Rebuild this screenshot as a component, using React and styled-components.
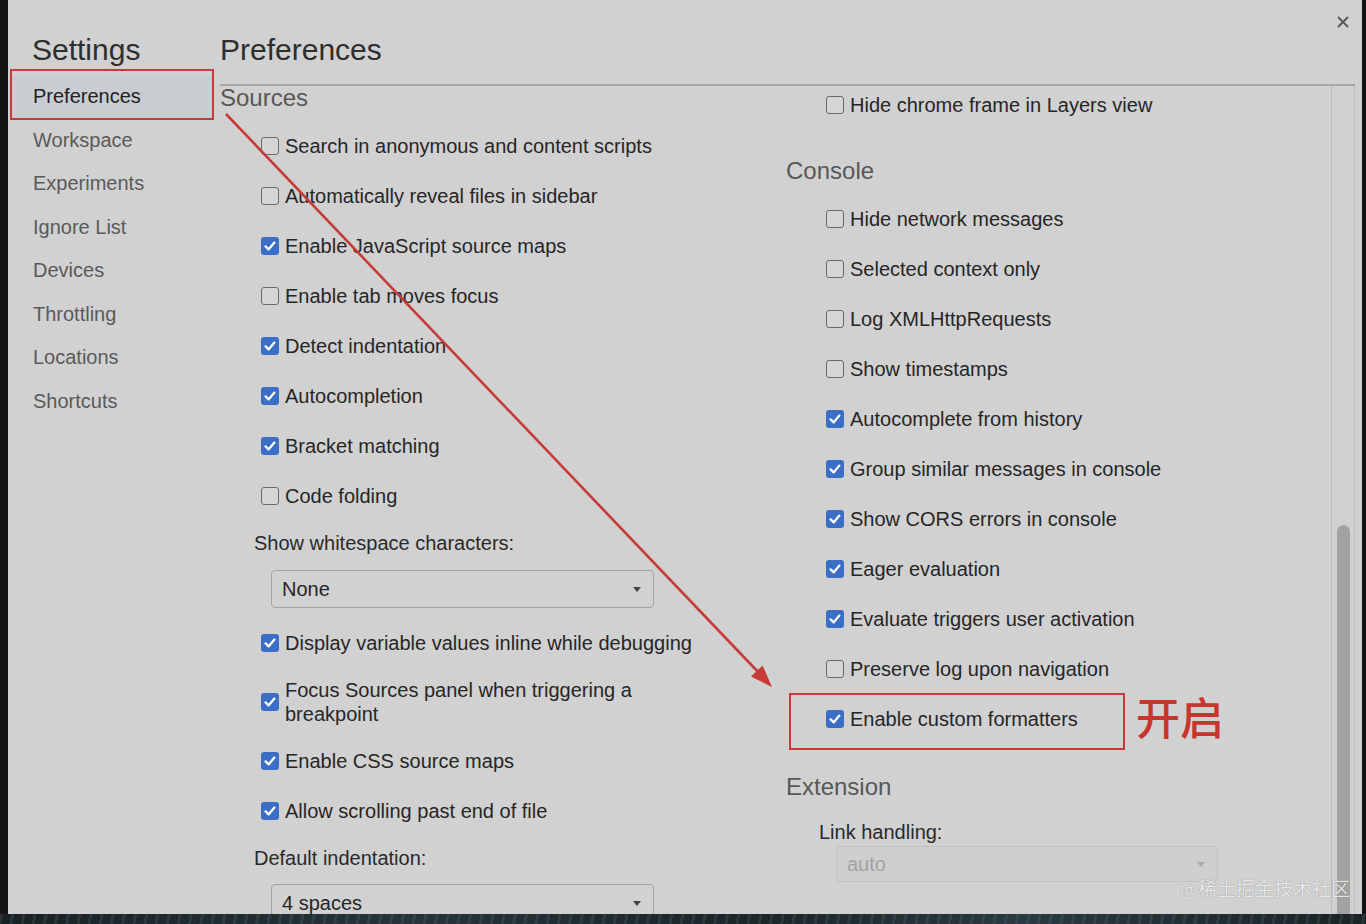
import React from 'react';
import styled, { createGlobalStyle } from 'styled-components';

const GlobalStyle = createGlobalStyle`
  html, body { margin: 0; padding: 0; background: #141414; }
  body { font-family: "Liberation Sans", Arial, sans-serif; }
  * { box-sizing: border-box; }
`;

const Screen = styled.div`
  position: relative;
  width: 1366px;
  height: 924px;
  overflow: hidden;
  display: flex;
  flex-direction: column;
  background: #141414;
`;

const Frame = styled.div`
  height: 914px;
  flex-shrink: 0;
  display: flex;
  padding: 0 4px 0 8px;
`;

const Dialog = styled.div`
  position: relative;
  flex: 1;
  display: flex;
  background: #d1d1d1;
  padding-right: 7px;
  overflow: hidden;
`;

const Sidebar = styled.nav`
  width: 204px;
  flex-shrink: 0;
  padding-top: 32px;
  display: flex;
  flex-direction: column;
`;

const BigTitle = styled.h1`
  margin: 0;
  font-size: 30px;
  line-height: 36px;
  font-weight: 400;
  color: #2e2e2e;
  padding-left: ${(p) => p.$indent || 0}px;
`;

const SideList = styled.ul`
  list-style: none;
  margin: 7px 0 0 4px;
  padding: 0;
`;

const SideItem = styled.li`
  height: 43.5px;
  display: flex;
  align-items: center;
  padding-left: 21px;
  font-size: 20px;
  color: ${(p) => (p.$active ? '#222' : '#5a5a5a')};
  background: ${(p) => (p.$active ? '#c9ccd0' : 'transparent')};
`;

const Main = styled.main`
  flex: 1;
  display: flex;
  flex-direction: column;
  padding-left: 8px;
  min-width: 0;
`;

const MainHeader = styled.div`
  padding: 32px 0 16px;
  border-bottom: 2px solid #a8a8a8;
`;

const ScrollArea = styled.div`
  flex: 1;
  display: flex;
  min-height: 0;
`;

const Column = styled.div`
  width: ${(p) => (p.$width ? `${p.$width}px` : 'auto')};
  flex: ${(p) => (p.$width ? 'none' : '1')};
  display: flex;
  flex-direction: column;
  & > * { flex-shrink: 0; }
`;

const SectionTitle = styled.h2`
  margin: ${(p) => p.$top || 0}px 0 11px;
  font-size: 24px;
  line-height: 24px;
  font-weight: 400;
  color: #575757;
`;

const Row = styled.label`
  display: flex;
  align-items: center;
  gap: 6px;
  min-height: ${(p) => p.$minH || 50}px;
  padding: ${(p) => p.$pad ?? 10}px 0 ${(p) => p.$pad ?? 10}px ${(p) => p.$indent}px;
  margin-top: ${(p) => p.$mt || 0}px;
  font-size: 20px;
  line-height: 24px;
  color: #262626;
`;

const RowText = styled.span`
  max-width: ${(p) => (p.$max ? `${p.$max}px` : 'none')};
`;

const Box = styled.span`
  width: 18px;
  height: 18px;
  flex-shrink: 0;
  border-radius: 3px;
  display: inline-flex;
  align-items: center;
  justify-content: center;
  background: ${(p) => (p.$on ? '#3b6ec6' : '#d5d5d5')};
  border: ${(p) => (p.$on ? 'none' : '1.5px solid #6a6a6a')};
`;

const FieldLabel = styled.div`
  padding-left: ${(p) => p.$indent}px;
  margin-top: ${(p) => p.$mt}px;
  font-size: 20px;
  line-height: 24px;
  color: #2a2a2a;
`;

const Select = styled.div`
  margin: ${(p) => p.$mt}px 0 0 ${(p) => p.$indent}px;
  width: ${(p) => p.$w}px;
  height: ${(p) => p.$h}px;
  border: 1px solid ${(p) => (p.$disabled ? '#c2c2c2' : '#a3a3a3')};
  border-radius: 4px;
  display: flex;
  align-items: center;
  justify-content: space-between;
  padding: 0 12px 0 10px;
  font-size: 20px;
  color: ${(p) => (p.$disabled ? '#a2a2a2' : '#262626')};
  background: ${(p) => (p.$disabled ? '#cfcfcf' : '#d1d1d1')};
`;

const Caret = styled.span`
  width: 0;
  height: 0;
  border-left: 4.5px solid transparent;
  border-right: 4.5px solid transparent;
  border-top: 5px solid ${(p) => (p.$disabled ? '#aaa' : '#444')};
`;

const Scrollbar = styled.div`
  width: 24px;
  flex-shrink: 0;
  border-left: 1px solid #bdbdbd;
  border-right: 1px solid #c0c0c0;
  display: flex;
  flex-direction: column;
  align-items: center;
  padding-top: 439px;
`;

const Thumb = styled.div`
  width: 13px;
  flex: 1;
  margin-left: 1px;
  background: #a2a2a2;
  border-radius: 7px 7px 0 0;
`;

const CloseButton = styled.button`
  position: absolute;
  top: 14px;
  right: 11px;
  width: 16px;
  height: 16px;
  padding: 0;
  border: none;
  background: transparent;
  display: flex;
  align-items: center;
  justify-content: center;
`;

const BottomStrip = styled.div`
  flex: 1;
  background:
    repeating-linear-gradient(100deg, rgba(80, 110, 120, 0.25) 0 3px, transparent 3px 11px),
    linear-gradient(90deg, #1a2124 0%, #26343a 30%, #1c2528 55%, #2a3a40 75%, #1b2225 100%);
`;

const Overlay = styled.svg`
  position: absolute;
  left: 0;
  top: 0;
  pointer-events: none;
`;

const RedBox = styled.div`
  position: absolute;
  left: ${(p) => p.$x}px;
  top: ${(p) => p.$y}px;
  width: ${(p) => p.$w}px;
  height: ${(p) => p.$h}px;
  border: 2px solid #c63b38;
  pointer-events: none;
`;

const Note = styled.div`
  position: absolute;
  left: 1136px;
  top: 688px;
  font-family: "Noto Sans CJK SC", sans-serif;
  font-size: 44px;
  line-height: 56px;
  font-weight: 500;
  color: #c8352f;
`;

const Watermark = styled.div`
  position: absolute;
  left: 1180px;
  top: 876px;
  font-family: "Noto Sans CJK SC", sans-serif;
  font-size: 19px;
  line-height: 24px;
  color: rgba(238, 238, 238, 0.95);
  text-shadow: 0 0 1px rgba(0, 0, 0, 0.4);
`;

const Check = ({ on }) => (
  <Box $on={on}>
    {on && (
      <svg width="14" height="14" viewBox="0 0 14 14">
        <polyline points="2.6,7.4 5.6,10.4 11.4,3.6" fill="none" stroke="#fff" strokeWidth="2.3" strokeLinecap="round" strokeLinejoin="round" />
      </svg>
    )}
  </Box>
);

const CheckRow = ({ on, indent, mt, max, minH, pad, children }) => (
  <Row $indent={indent} $mt={mt} $minH={minH} $pad={pad}>
    <Check on={on} />
    <RowText $max={max}>{children}</RowText>
  </Row>
);

const sideItems = ['Preferences', 'Workspace', 'Experiments', 'Ignore List', 'Devices', 'Throttling', 'Locations', 'Shortcuts'];

const sources = [
  ['Search in anonymous and content scripts', false],
  ['Automatically reveal files in sidebar', false],
  ['Enable JavaScript source maps', true],
  ['Enable tab moves focus', false],
  ['Detect indentation', true],
  ['Autocompletion', true],
  ['Bracket matching', true],
  ['Code folding', false],
];

const consoleItems = [
  ['Hide network messages', false],
  ['Selected context only', false],
  ['Log XMLHttpRequests', false],
  ['Show timestamps', false],
  ['Autocomplete from history', true],
  ['Group similar messages in console', true],
  ['Show CORS errors in console', true],
  ['Eager evaluation', true],
  ['Evaluate triggers user activation', true],
  ['Preserve log upon navigation', false],
  ['Enable custom formatters', true],
];

export default function App() {
  return (
    <>
      <GlobalStyle />
      <Screen>
        <Frame>
          <Dialog>
            <Sidebar>
              <BigTitle $indent={24}>Settings</BigTitle>
              <SideList>
                {sideItems.map((s, i) => (
                  <SideItem key={s} $active={i === 0}>{s}</SideItem>
                ))}
              </SideList>
            </Sidebar>
            <Main>
              <MainHeader>
                <BigTitle>Preferences</BigTitle>
              </MainHeader>
              <ScrollArea>
                <Column $width={566}>
                  <SectionTitle>Sources</SectionTitle>
                  {sources.map(([t, on]) => (
                    <CheckRow key={t} on={on} indent={41}>{t}</CheckRow>
                  ))}
                  <FieldLabel $indent={34} $mt={10}>Show whitespace characters:</FieldLabel>
                  <Select $mt={15} $indent={51} $w={383} $h={38}>
                    None<Caret />
                  </Select>
                  <CheckRow on indent={41} mt={10}>Display variable values inline while debugging</CheckRow>
                  <CheckRow on indent={41} max={380}>Focus Sources panel when triggering a breakpoint</CheckRow>
                  <CheckRow on indent={41}>Enable CSS source maps</CheckRow>
                  <CheckRow on indent={41}>Allow scrolling past end of file</CheckRow>
                  <FieldLabel $indent={34} $mt={10}>Default indentation:</FieldLabel>
                  <Select $mt={14} $indent={51} $w={383} $h={38}>
                    4 spaces<Caret />
                  </Select>
                </Column>
                <Column>
                  <CheckRow on={false} indent={40} minH={38} pad={7}>Hide chrome frame in Layers view</CheckRow>
                  <SectionTitle $top={35}>Console</SectionTitle>
                  {consoleItems.map(([t, on]) => (
                    <CheckRow key={t} on={on} indent={40}>{t}</CheckRow>
                  ))}
                  <SectionTitle $top={31}>Extension</SectionTitle>
                  <FieldLabel $indent={33} $mt={10}>Link handling:</FieldLabel>
                  <Select $disabled $mt={2} $indent={50} $w={382} $h={36}>
                    auto<Caret $disabled />
                  </Select>
                </Column>
                <Scrollbar>
                  <Thumb />
                </Scrollbar>
              </ScrollArea>
            </Main>
            <CloseButton aria-label="Close">
              <svg width="12" height="12" viewBox="0 0 12 12">
                <path d="M1.5 1.5 L10.5 10.5 M10.5 1.5 L1.5 10.5" stroke="#555" strokeWidth="1.8" strokeLinecap="round" />
              </svg>
            </CloseButton>
          </Dialog>
        </Frame>
        <BottomStrip />
        <RedBox $x={10} $y={69} $w={204} $h={51} />
        <RedBox $x={789} $y={693} $w={336} $h={57} />
        <Note>开启</Note>
        <Overlay width="1366" height="924" viewBox="0 0 1366 924">
          <line x1="226" y1="114" x2="760" y2="674" stroke="#c63b38" strokeWidth="2.6" />
          <polygon points="772,687 751,676.6 762.6,665.6" fill="#c63b38" />
        </Overlay>
        <Watermark>@稀土掘金技术社区</Watermark>
      </Screen>
    </>
  );
}
